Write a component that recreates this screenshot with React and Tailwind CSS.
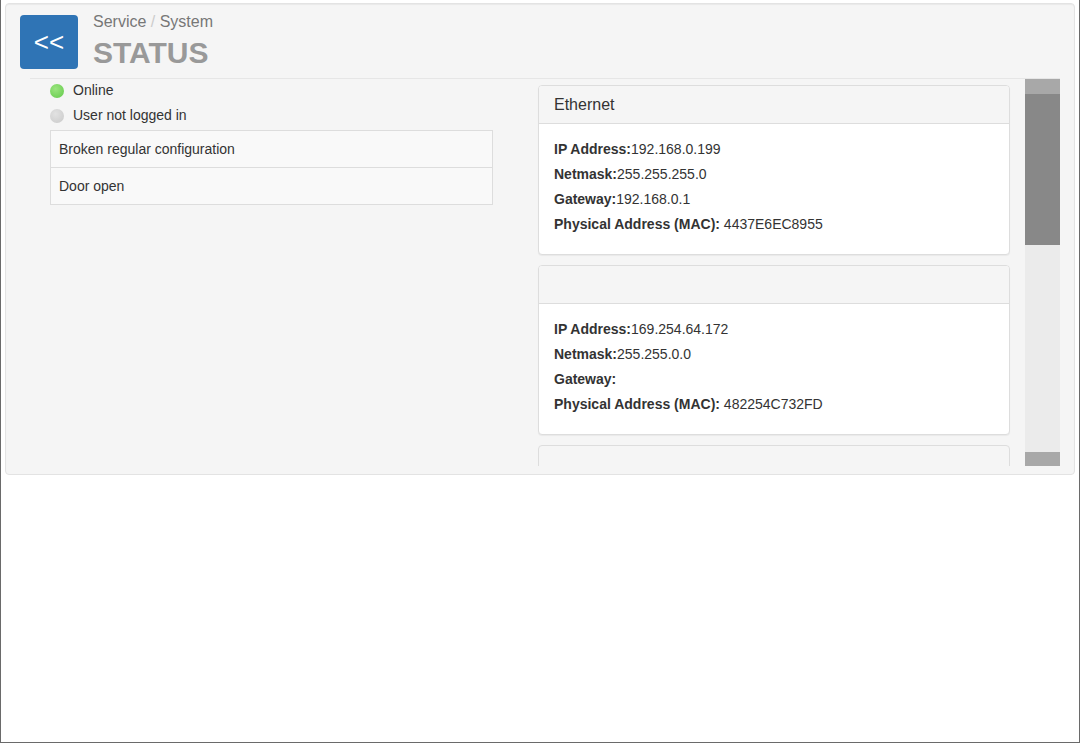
import React from 'react';

// --- Data ---
const alarms = ['Broken regular configuration', 'Door open'];

const interfaces = [
  {
    title: 'Ethernet',
    ip: '192.168.0.199',
    netmask: '255.255.255.0',
    gateway: '192.168.0.1',
    mac: '4437E6EC8955',
  },
  {
    title: '',
    ip: '169.254.64.172',
    netmask: '255.255.0.0',
    gateway: '',
    mac: '482254C732FD',
  },
];

const StatusDot = ({ on }) => (
  <span
    className={
      on
        ? 'inline-block h-[14px] w-[14px] rounded-full bg-[radial-gradient(circle_at_40%_35%,#9be57f,#62c94a)]'
        : 'inline-block h-[14px] w-[14px] rounded-full bg-[radial-gradient(circle_at_40%_35%,#e2e2e2,#c9c9c9)]'
    }
  />
);

const InfoRow = ({ label, value, spaced }) => (
  <div className="h-[25px] leading-[25px] whitespace-nowrap">
    <b className="font-bold">{label}</b>
    {spaced ? ' ' : ''}
    {value}
  </div>
);

const NetPanel = ({ net }) => (
  <div className="rounded-[4px] border border-[#dddddd] bg-white shadow-[0_1px_1px_rgba(0,0,0,0.05)]">
    <div className="h-[38px] border-b border-[#dddddd] bg-[#f5f5f5] px-[15px] text-[16px] leading-[37px] text-[#333] rounded-t-[3px]">
      {net.title}
    </div>
    <div className="px-[15px] pt-[13px] pb-[17px] text-[14px] text-[#333]">
      <InfoRow label="IP Address:" value={net.ip} />
      <InfoRow label="Netmask:" value={net.netmask} />
      <InfoRow label="Gateway:" value={net.gateway} />
      <InfoRow label="Physical Address (MAC):" value={net.mac} spaced />
    </div>
  </div>
);

export default function App() {
  return (
    <div className="h-[743px] w-[1080px] overflow-hidden border-x border-b border-[#6a6a6a] bg-white font-['Liberation_Sans',Arial,sans-serif]">
      <div className="mx-[4px] mt-[3px] flex h-[472px] flex-col rounded-[4px] border border-[#e3e3e3] bg-[#f5f5f5] shadow-[inset_0_1px_1px_rgba(0,0,0,0.05)]">
        {/* header */}
        <div className="flex h-[74px] items-start pl-[14px] pt-[11px]">
          <button className="flex h-[54px] w-[58px] items-center justify-center rounded-[4px] bg-[#2f74b5] text-[26px] leading-none text-white">
            &lt;&lt;
          </button>
          <div className="ml-[15px] -mt-[3px]">
            <div className="text-[16px] leading-[20px] text-[#777]">
              Service <span className="text-[#ccc]">/</span> System
            </div>
            <div className="mt-[3px] text-[30px] font-bold leading-[36px] text-[#999]">STATUS</div>
          </div>
        </div>

        {/* scroll area */}
        <div className="ml-[24px] mr-[14px] flex h-[388px] border-t border-[#e6e6e6]">
          <div className="flex flex-1 overflow-hidden">
            <div className="ml-[20px] -mt-[1px] w-[443px] text-[14px] text-[#333]">
              <div className="flex h-[25px] items-center gap-[9px]">
                <StatusDot on />
                <span>Online</span>
              </div>
              <div className="flex h-[25px] items-center gap-[9px]">
                <StatusDot />
                <span>User not logged in</span>
              </div>
              <div className="mt-[2px] border border-[#dddddd] bg-[#f9f9f9]">
                {alarms.map((a, i) => (
                  <div
                    key={a}
                    className={
                      i > 0
                        ? 'h-[37px] border-t border-[#dddddd] pl-[8px] leading-[36px]'
                        : 'h-[36px] pl-[8px] leading-[36px]'
                    }
                  >
                    {a}
                  </div>
                ))}
              </div>
            </div>
            <div className="ml-[45px] flex w-[472px] flex-col gap-[10px] pt-[6px]">
              {interfaces.map((n, i) => (
                <NetPanel key={i} net={n} />
              ))}
              <div className="h-[40px] shrink-0 rounded-t-[4px] border border-[#dddddd] bg-[#f5f5f5]" />
            </div>
          </div>
          {/* scrollbar */}
          <div className="flex w-[35px] flex-col bg-[#ebebeb]">
            <div className="h-[15px] bg-[#a8a8a8]" />
            <div className="h-[151px] bg-[#888888]" />
            <div className="flex-1" />
            <div className="h-[14px] bg-[#a8a8a8]" />
          </div>
        </div>
      </div>
    </div>
  );
}
